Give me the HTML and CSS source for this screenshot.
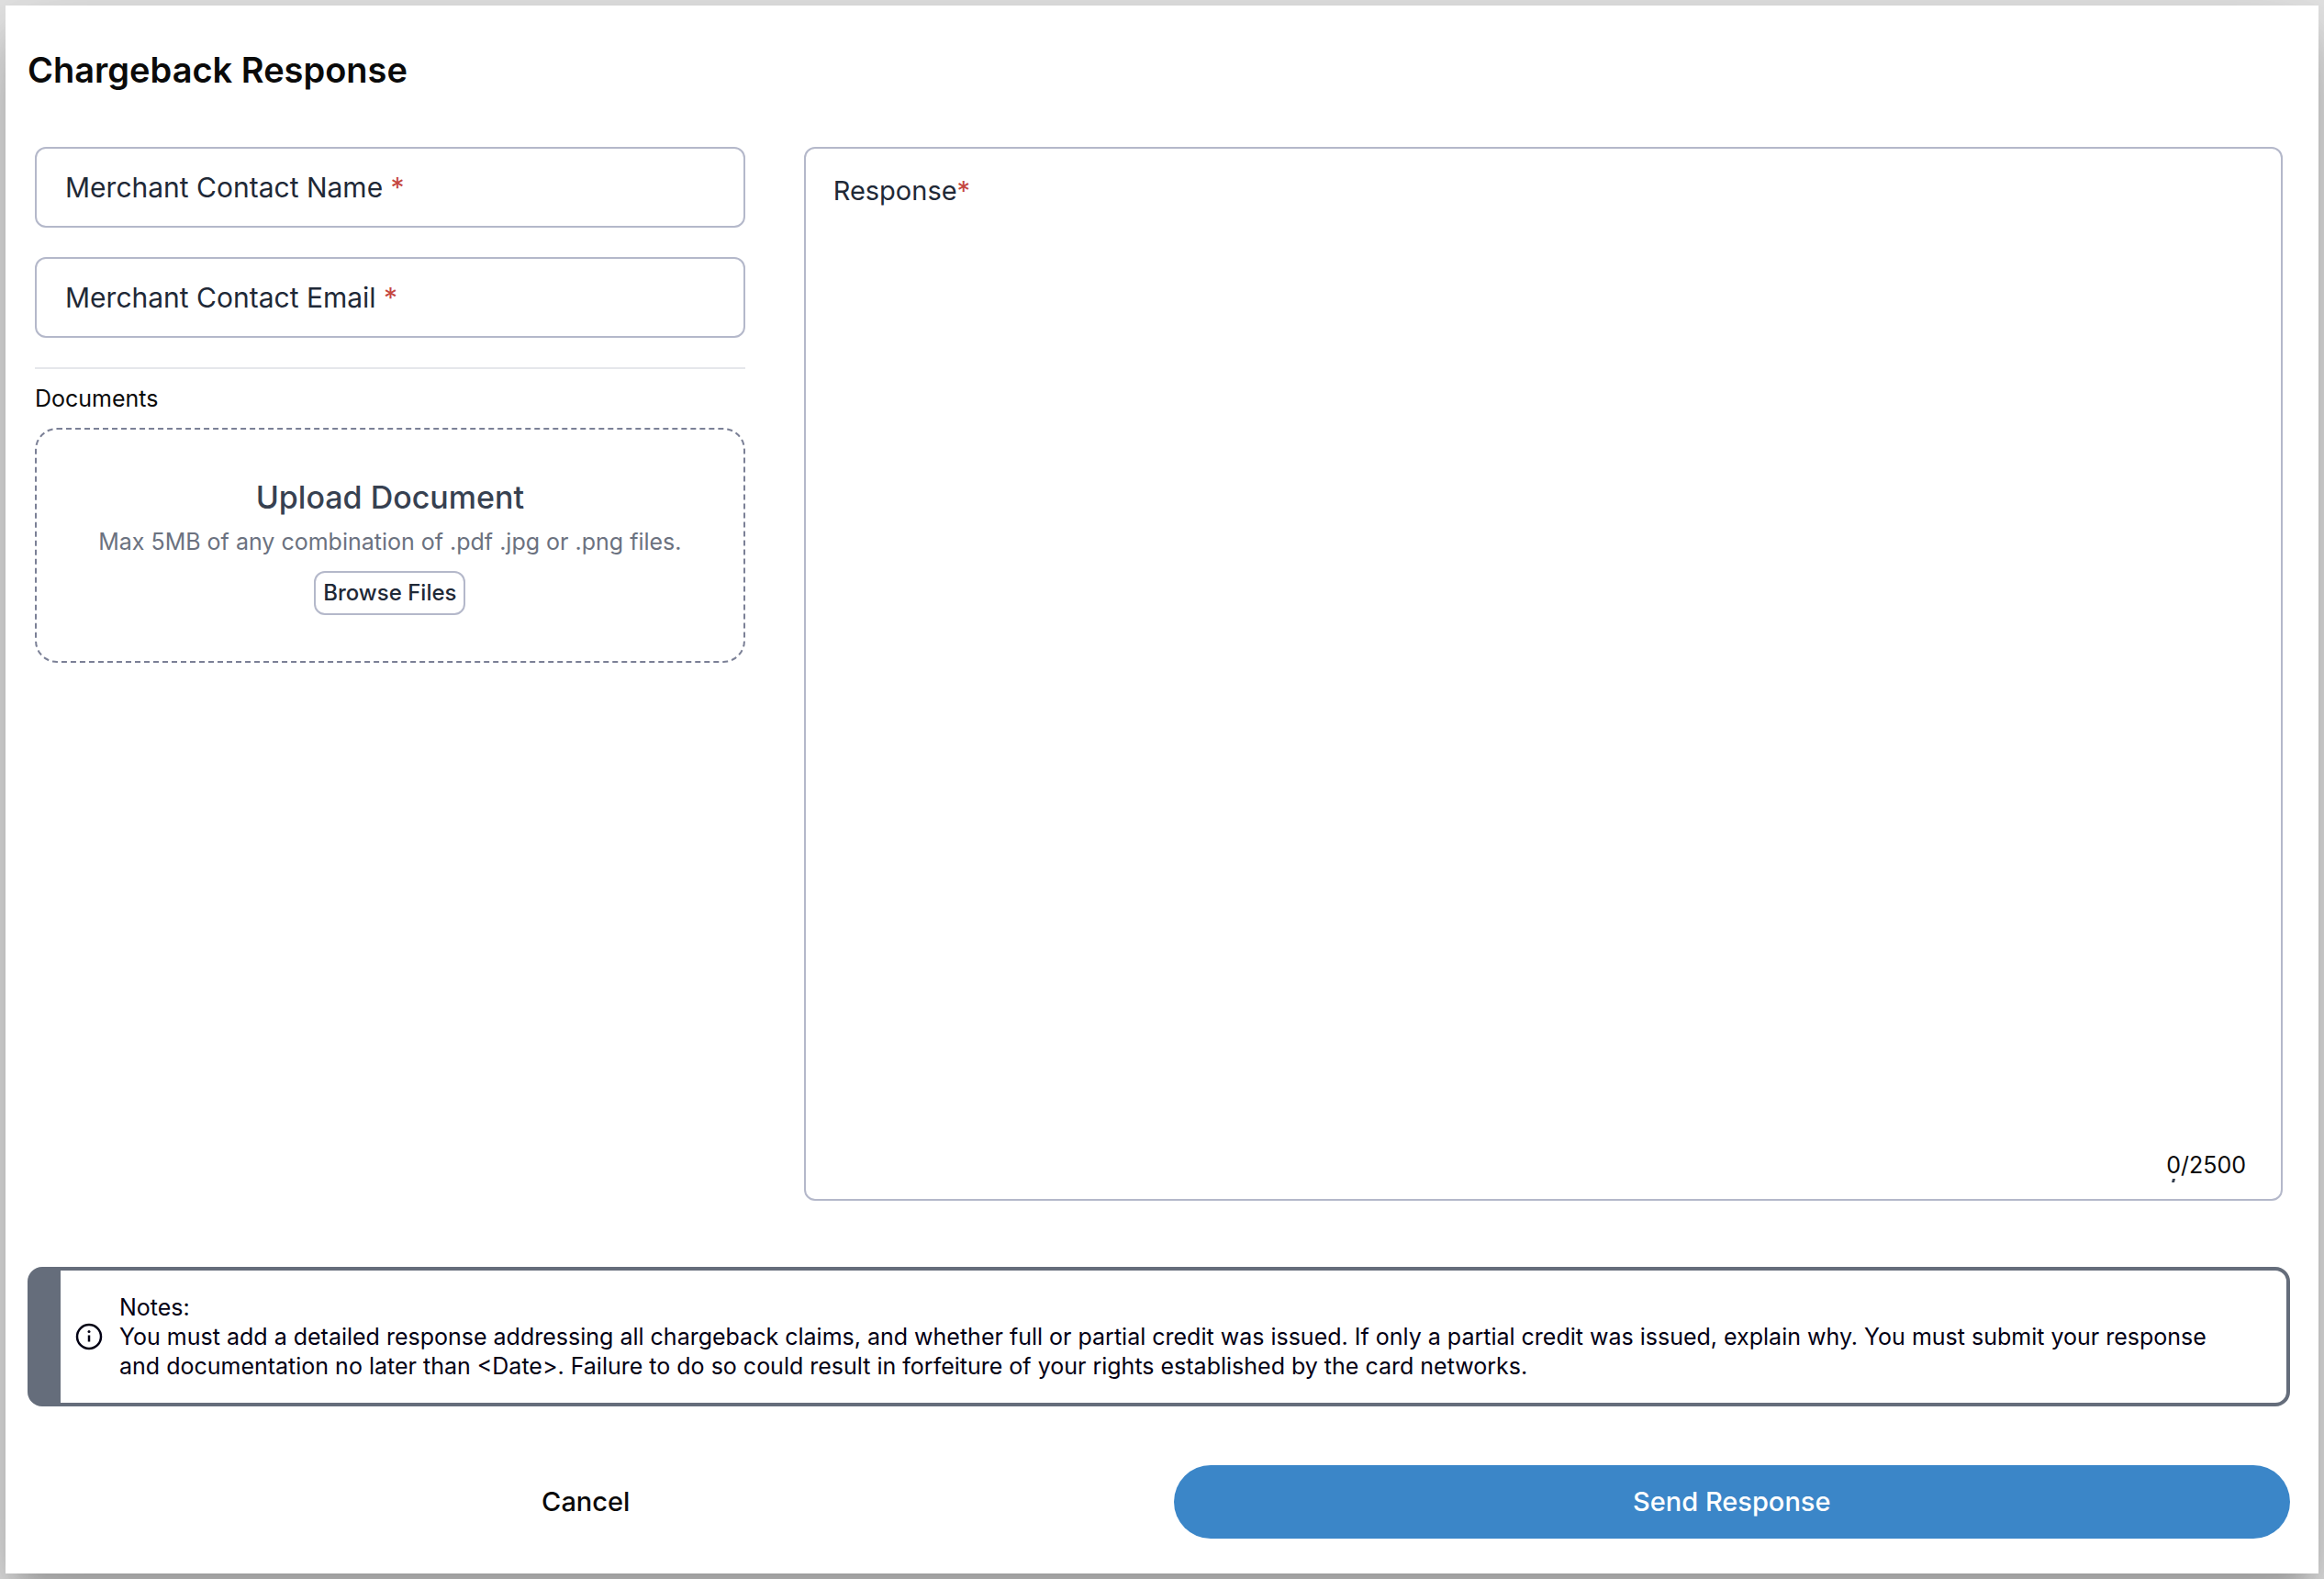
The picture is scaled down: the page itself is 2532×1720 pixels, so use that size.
FILE: index.html
```html
<!DOCTYPE html>
<html lang="en">
<head>
<meta charset="utf-8">
<meta name="viewport" content="width=device-width, initial-scale=1">
<title>Chargeback Response</title>
<link rel="stylesheet" href="styles.css">
</head>
<body>
<form class="dialog">
  <h1 class="dialog-title">Chargeback Response</h1>
  <div class="form-grid">
    <div class="contact">
      <div class="field">
        <input class="control" id="name" type="text" required>
        <label class="field-label" for="name">Merchant Contact Name <span class="required">*</span></label>
      </div>
      <div class="field">
        <input class="control" id="email" type="email" required>
        <label class="field-label" for="email">Merchant Contact Email <span class="required">*</span></label>
      </div>
      <hr class="divider">
      <h2 class="section-label">Documents</h2>
      <div class="dropzone">
        <h3 class="dropzone-title">Upload Document</h3>
        <p class="dropzone-hint">Max 5MB of any combination of .pdf .jpg or .png files.</p>
        <button class="browse" type="button">Browse Files</button>
      </div>
    </div>
    <div class="field response">
      <textarea class="control response-text" id="response" maxlength="2500" required></textarea>
      <label class="field-label response-label" for="response">Response<span class="required">*</span></label>
      <div class="counter">0/2500</div>
      <svg class="counter-mark" viewBox="0 0 4 4" aria-hidden="true"><path d="M1 0h3L3 4H0z"/></svg>
    </div>
  </div>
  <section class="notes">
    <svg class="info-icon" viewBox="0 0 30 30" aria-hidden="true">
      <circle cx="15" cy="15" r="13" fill="none" stroke="currentColor" stroke-width="2.5"/>
      <circle cx="15" cy="9.5" r="1.5" fill="currentColor"/>
      <path d="M15 13.5v7" fill="none" stroke="currentColor" stroke-width="2.5"/>
    </svg>
    <p class="notes-text">Notes:<br>You must add a detailed response addressing all chargeback claims, and whether full or partial credit was issued. If only a partial credit was issued, explain why. You must submit your response and documentation no later than &lt;Date&gt;. Failure to do so could result in forfeiture of your rights established by the card networks.</p>
  </section>
  <div class="actions">
    <button class="action" type="button">Cancel</button>
    <button class="action action-primary" type="submit">Send Response</button>
  </div>
</form>
</body>
</html>
```
FILE: styles.css
```css
* {
  box-sizing: border-box;
}

body {
  display: flex;
  min-height: 100vh;
  margin: 0;
  padding: 6px;
  background: #e8e8e8;
  color: #0a0a0a;
  font-family: Inter, "Open Sans", sans-serif;
  font-size: 25px;
  line-height: 32px;
}

h1, h2, h3, p {
  margin: 0;
}

button, input, textarea {
  font: inherit;
  color: inherit;
}

.dialog {
  display: flex;
  flex: 1;
  flex-direction: column;
  padding: 46px 31px 38px 24px;
  background: #fff;
  box-shadow: 0 22px 30px -14px rgba(0, 0, 0, 0.2),
    0 48px 76px 6px rgba(0, 0, 0, 0.14),
    0 18px 92px 16px rgba(0, 0, 0, 0.12);
}

.dialog-title {
  font-size: 38px;
  font-weight: 600;
  line-height: 48px;
}

.form-grid {
  display: grid;
  flex: 1;
  grid-template-columns: repeat(3, 1fr);
  gap: 64px;
  margin-top: 60px;
  padding: 0 8px;
}

.contact {
  display: flex;
  flex-direction: column;
}

.field {
  position: relative;
  display: flex;
}

.contact .field {
  margin-bottom: 32px;
}

.control {
  width: 100%;
  height: 88px;
  padding: 0 32px;
  border: 2px solid #b4b8ca;
  border-radius: 12px;
  background: #fff;
  color: #1f2937;
  font-size: 30px;
}

.field-label {
  position: absolute;
  top: 24px;
  left: 33px;
  color: #1f2937;
  font-size: 30px;
  line-height: 40px;
  cursor: text;
}

.required {
  color: #c5473f;
}

.divider {
  width: 100%;
  height: 2px;
  margin: 0;
  border: 0;
  background: #e5e7eb;
}

.section-label {
  margin: 16px 0;
  font-size: 25px;
  font-weight: 400;
  line-height: 32px;
}

.dropzone {
  display: flex;
  flex-direction: column;
  align-items: center;
  padding: 54px 16px 50px;
  border: 2px dashed #7b8096;
  border-radius: 24px;
  text-align: center;
}

.dropzone-title {
  color: #374151;
  font-size: 34px;
  font-weight: 500;
  line-height: 40px;
}

.dropzone-hint {
  margin: 12px 0 16px;
  color: #6b7280;
}

.browse {
  height: 48px;
  padding: 0 8px;
  border: 2px solid #b4b8ca;
  border-radius: 12px;
  background: #fff;
  color: #1f2937;
  font-size: 24px;
  font-weight: 500;
}

.response {
  grid-column: span 2;
}

.response-text {
  height: auto;
  padding: 80px 32px;
  resize: none;
}

.response-label {
  left: 32px;
  top: 28px;
  font-size: 29px;
}

.counter {
  position: absolute;
  right: 40px;
  bottom: 23px;
}

.counter-mark {
  position: absolute;
  right: 117px;
  bottom: 20px;
  width: 4px;
  height: 4px;
  fill: #374151;
}

.notes {
  display: flex;
  align-items: center;
  gap: 18px;
  margin-top: 72px;
  padding: 24px 48px 24px 16px;
  border: 4px solid #656d7b;
  border-left-width: 36px;
  border-radius: 16px;
  color: #030014;
}

.info-icon {
  flex: none;
  width: 30px;
  height: 30px;
}

.actions {
  display: grid;
  grid-template-columns: 1fr 1fr;
  gap: 32px;
  margin-top: 64px;
}

.action {
  height: 80px;
  border: 0;
  border-radius: 40px;
  background: transparent;
  font-size: 29px;
  font-weight: 500;
}

.action-primary {
  background: #3b86c8;
  color: #fff;
}
```
